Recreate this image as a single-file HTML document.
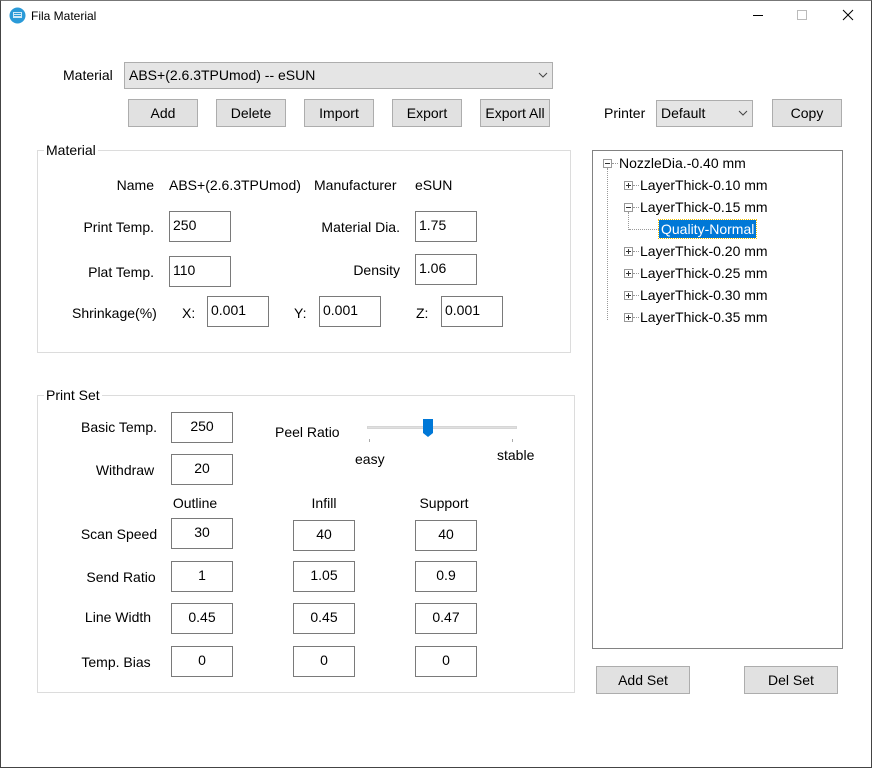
<!DOCTYPE html>
<html><head><meta charset="utf-8"><style>
*{box-sizing:border-box;margin:0;padding:0}
body{width:872px;height:768px;overflow:hidden;background:#fff;font-family:"Liberation Sans",sans-serif;font-size:14px;color:#000;position:relative}
.a{position:absolute;white-space:nowrap;line-height:16px}
.r{text-align:right}
.c{text-align:center}
.in{position:absolute;border:1px solid #7a7a7a;background:#fff;width:62px;height:31px;line-height:27px;padding-left:3px}
.inc{text-align:center;padding-left:0}
.btn{position:absolute;background:#e1e1e1;border:1px solid #adadad;height:28px;line-height:26px;text-align:center}
.grp{position:absolute;border:1px solid #dcdcdc}
.gt{position:absolute;background:#fff;padding:0 2px;line-height:16px}
.tr{position:absolute;line-height:16px;white-space:nowrap}
.pm{position:absolute;width:9px;height:9px;border:1px solid #999;background:#fff}
.pm:before{content:"";position:absolute;left:1px;top:3px;width:5px;height:1px;background:#333}
.pl:after{content:"";position:absolute;left:3px;top:1px;width:1px;height:5px;background:#333}
.dh{position:absolute;height:0;border-top:1px dotted #999;width:6px}
</style></head><body>
<div style="position:absolute;left:0;top:0;width:872px;height:768px;border:1px solid #444;border-top:1px solid #777"></div>
<svg class="a" style="left:9px;top:7px" width="17" height="17" viewBox="0 0 17 17"><circle cx="8.5" cy="8.5" r="8" fill="#2a9ad8"/><rect x="4" y="5" width="9" height="6" fill="#cfe9f7"/><rect x="5" y="6" width="7" height="1" fill="#2a9ad8"/><rect x="5" y="8" width="7" height="1" fill="#2a9ad8"/></svg>
<div class="a" style="left:31px;top:8px;font-size:12px">Fila Material</div>
<div class="a" style="left:753px;top:15px;width:10px;height:1px;background:#000"></div>
<div class="a" style="left:797px;top:10px;width:10px;height:10px;border:1px solid #bbb"></div>
<svg class="a" style="left:842px;top:9px" width="12" height="12"><path d="M1 1L11 11M11 1L1 11" stroke="#000" stroke-width="1"/></svg>

<div class="a" style="left:63px;top:67px">Material</div>
<div class="a" style="left:124px;top:62px;width:429px;height:27px;background:#e5e5e5;border:1px solid #adadad;line-height:25px;padding-left:4px">ABS+(2.6.3TPUmod) -- eSUN</div>
<svg class="a" style="left:538px;top:72px" width="10" height="6"><path d="M1 1L5 5L9 1" stroke="#444" fill="none"/></svg>
<div class="btn" style="left:128px;top:99px;width:70px">Add</div>
<div class="btn" style="left:216px;top:99px;width:70px">Delete</div>
<div class="btn" style="left:304px;top:99px;width:70px">Import</div>
<div class="btn" style="left:392px;top:99px;width:70px">Export</div>
<div class="btn" style="left:480px;top:99px;width:70px">Export All</div>
<div class="a" style="left:604px;top:105px">Printer</div>
<div class="a" style="left:656px;top:100px;width:97px;height:27px;background:#e5e5e5;border:1px solid #adadad;line-height:25px;padding-left:4px">Default</div>
<svg class="a" style="left:738px;top:110px" width="10" height="6"><path d="M1 1L5 5L9 1" stroke="#444" fill="none"/></svg>
<div class="btn" style="left:772px;top:99px;width:70px">Copy</div>

<div class="grp" style="left:37px;top:150px;width:534px;height:203px"></div>
<div class="gt" style="left:44px;top:142px">Material</div>
<div class="a r" style="left:60px;top:177px;width:94px">Name</div>
<div class="a" style="left:169px;top:177px">ABS+(2.6.3TPUmod)</div>
<div class="a" style="left:314px;top:177px">Manufacturer</div>
<div class="a" style="left:415px;top:177px">eSUN</div>
<div class="a r" style="left:40px;top:219px;width:114px">Print Temp.</div>
<div class="in" style="left:169px;top:211px">250</div>
<div class="a r" style="left:280px;top:219px;width:120px">Material Dia.</div>
<div class="in" style="left:415px;top:211px">1.75</div>
<div class="a r" style="left:40px;top:264px;width:114px">Plat Temp.</div>
<div class="in" style="left:169px;top:256px">110</div>
<div class="a r" style="left:280px;top:262px;width:120px">Density</div>
<div class="in" style="left:415px;top:254px">1.06</div>
<div class="a" style="left:72px;top:305px">Shrinkage(%)</div>
<div class="a" style="left:182px;top:305px">X:</div>
<div class="in" style="left:207px;top:296px">0.001</div>
<div class="a" style="left:294px;top:305px">Y:</div>
<div class="in" style="left:319px;top:296px">0.001</div>
<div class="a" style="left:416px;top:305px">Z:</div>
<div class="in" style="left:441px;top:296px">0.001</div>

<div class="grp" style="left:37px;top:395px;width:538px;height:298px"></div>
<div class="gt" style="left:44px;top:387px">Print Set</div>
<div class="a c" style="left:70px;top:419px;width:98px">Basic Temp.</div>
<div class="in inc" style="left:171px;top:412px">250</div>
<div class="a c" style="left:70px;top:462px;width:110px">Withdraw</div>
<div class="in inc" style="left:171px;top:454px">20</div>
<div class="a" style="left:275px;top:424px">Peel Ratio</div>
<div class="a" style="left:367px;top:426px;width:150px;height:3px;background:#e0e0e0;border:1px solid #d6d6d6"></div>
<div class="a" style="left:369px;top:439px;width:1px;height:3px;background:#aaa"></div>
<div class="a" style="left:512px;top:439px;width:1px;height:3px;background:#aaa"></div>
<svg class="a" style="left:423px;top:419px" width="11" height="19"><path d="M0 0H10V14L5 18L0 14Z" fill="#0078d7"/></svg>
<div class="a" style="left:355px;top:451px">easy</div>
<div class="a" style="left:497px;top:447px">stable</div>
<div class="a c" style="left:165px;top:495px;width:60px">Outline</div>
<div class="a c" style="left:294px;top:495px;width:60px">Infill</div>
<div class="a c" style="left:414px;top:495px;width:60px">Support</div>
<div class="a c" style="left:70px;top:526px;width:98px">Scan Speed</div>
<div class="in inc" style="left:171px;top:518px">30</div>
<div class="in inc" style="left:293px;top:520px">40</div>
<div class="in inc" style="left:415px;top:520px">40</div>
<div class="a c" style="left:72px;top:569px;width:98px">Send Ratio</div>
<div class="in inc" style="left:171px;top:561px">1</div>
<div class="in inc" style="left:293px;top:561px">1.05</div>
<div class="in inc" style="left:415px;top:561px">0.9</div>
<div class="a c" style="left:69px;top:609px;width:98px">Line Width</div>
<div class="in inc" style="left:171px;top:603px">0.45</div>
<div class="in inc" style="left:293px;top:603px">0.45</div>
<div class="in inc" style="left:415px;top:603px">0.47</div>
<div class="a c" style="left:67px;top:654px;width:98px">Temp. Bias</div>
<div class="in inc" style="left:171px;top:646px">0</div>
<div class="in inc" style="left:293px;top:646px">0</div>
<div class="in inc" style="left:415px;top:646px">0</div>

<div class="a" style="left:592px;top:150px;width:251px;height:499px;border:1px solid #828282"></div>
<div class="a" style="left:607px;top:168px;width:0;height:152px;border-left:1px dotted #999"></div>
<div class="a" style="left:628px;top:212px;width:0;height:18px;border-left:1px dotted #999"></div>
<div class="pm" style="left:603px;top:159px"></div><div class="dh" style="left:612px;top:163px"></div>
<div class="tr" style="left:619px;top:155px">NozzleDia.-0.40 mm</div>
<div class="pm pl" style="left:624px;top:181px"></div><div class="dh" style="left:633px;top:185px"></div>
<div class="tr" style="left:640px;top:177px">LayerThick-0.10 mm</div>
<div class="pm" style="left:624px;top:203px"></div><div class="dh" style="left:633px;top:207px"></div>
<div class="tr" style="left:640px;top:199px">LayerThick-0.15 mm</div>
<div class="dh" style="left:629px;top:229px;width:30px"></div>
<div class="tr" style="left:659px;top:220px;background:#0078d7;color:#fff;padding:0 2px;height:18px;line-height:18px;outline:1px dotted #f0c000">Quality-Normal</div>
<div class="pm pl" style="left:624px;top:247px"></div><div class="dh" style="left:633px;top:251px"></div>
<div class="tr" style="left:640px;top:243px">LayerThick-0.20 mm</div>
<div class="pm pl" style="left:624px;top:269px"></div><div class="dh" style="left:633px;top:273px"></div>
<div class="tr" style="left:640px;top:265px">LayerThick-0.25 mm</div>
<div class="pm pl" style="left:624px;top:291px"></div><div class="dh" style="left:633px;top:295px"></div>
<div class="tr" style="left:640px;top:287px">LayerThick-0.30 mm</div>
<div class="pm pl" style="left:624px;top:313px"></div><div class="dh" style="left:633px;top:317px"></div>
<div class="tr" style="left:640px;top:309px">LayerThick-0.35 mm</div>
<div class="btn" style="left:596px;top:666px;width:94px">Add Set</div>
<div class="btn" style="left:744px;top:666px;width:94px">Del Set</div>
</body></html>
